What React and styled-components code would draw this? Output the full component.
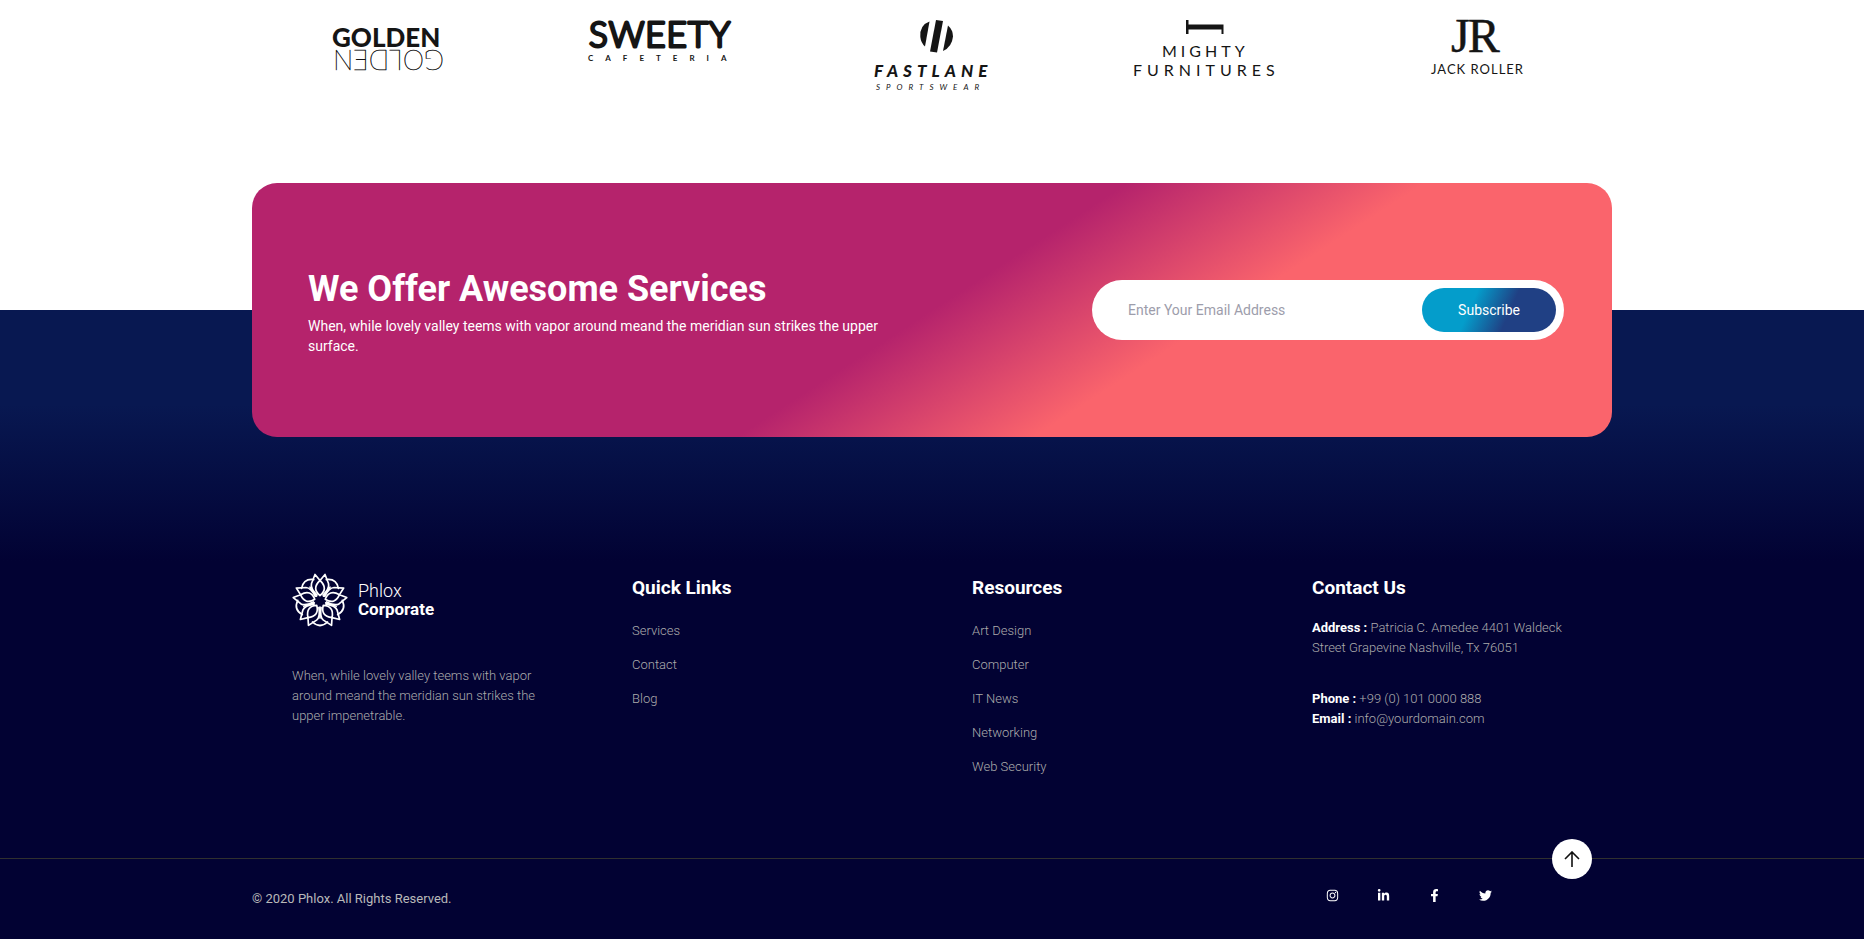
import React from "react";
import styled, { createGlobalStyle } from "styled-components";
import { FaInstagram, FaLinkedinIn, FaFacebookF, FaTwitter } from "react-icons/fa";

const GlobalStyle = createGlobalStyle`
  *, *::before, *::after { box-sizing: border-box; }
  body {
    margin: 0;
    background: #ffffff;
    font-family: Roboto, "Liberation Sans", sans-serif;
  }
  h2, h3, p, ul { margin: 0; padding: 0; }
  ul { list-style: none; }
`;

const Container = styled.div`
  position: relative;
  width: 100%;
  max-width: 1360px;
  margin: 0 auto;
`;

const ClientsSection = styled.section`
  padding: 20px 0 91px;
`;

const ClientRow = styled.ul`
  display: grid;
  grid-template-columns: repeat(5, 1fr);
  justify-items: center;
`;

const ClientLogo = styled.svg`
  display: block;
  width: 160px;
  height: 72px;
  overflow: visible;
  fill: #151515;
`;

const LogoText = styled.text`
  font-family: ${(p) => p.$family || "Lato"}, "Liberation Sans", sans-serif;
  font-size: ${(p) => p.$size}px;
  font-weight: ${(p) => p.$weight || 400};
  font-style: ${(p) => (p.$italic ? "italic" : "normal")};
  letter-spacing: ${(p) => p.$tracking || 0}px;
  stroke: #151515;
  stroke-width: ${(p) => p.$stroke || 0}px;
  stroke-linejoin: round;
`;

const OfferCard = styled.section`
  position: relative;
  z-index: 1;
  display: flex;
  align-items: center;
  justify-content: space-between;
  gap: 40px;
  padding: 81px 48px 81px 56px;
  border-radius: 25px;
  background: linear-gradient(147deg, #b5236c 50%, #fa646c 67%);
  color: #ffffff;
`;

const OfferText = styled.div`
  flex: 0 1 600px;
`;

const OfferTitle = styled.h2`
  margin-bottom: 2px;
  font-size: 36px;
  font-weight: 700;
  line-height: 50px;
`;

const OfferCopy = styled.p`
  font-size: 14px;
  font-weight: 400;
  line-height: 20px;
`;

const SubscribeForm = styled.form`
  display: flex;
  flex: 0 1 472px;
  min-width: 0;
  padding: 8px;
  border-radius: 30px;
  background: #ffffff;
`;

const EmailInput = styled.input`
  flex: 1;
  min-width: 0;
  height: 44px;
  padding: 0 28px;
  border: 0;
  outline: 0;
  background: transparent;
  font: 400 14px/20px Roboto, "Liberation Sans", sans-serif;
  color: #333344;
  &::placeholder { color: #9d9dab; opacity: 1; }
`;

const SubscribeButton = styled.button`
  height: 44px;
  padding: 0 36px;
  border: 0;
  border-radius: 22px;
  background: linear-gradient(114deg, #049dcb 37%, #204084 64%);
  font: 400 14px/20px Roboto, "Liberation Sans", sans-serif;
  color: #ffffff;
  cursor: pointer;
`;

const Footer = styled.footer`
  margin-top: -127px;
  background: linear-gradient(180deg, #081851 15%, #020233 40%);
`;

const FooterColumns = styled.div`
  display: grid;
  grid-template-columns: repeat(4, 1fr);
  padding: 264px 0 81px;
`;

const Column = styled.div`
  padding: 0 48px 0 40px;
`;

const ContactColumn = styled(Column)`
  padding-right: 40px;
`;

const ColumnTitle = styled.h3`
  font-size: 19px;
  font-weight: 700;
  line-height: 28px;
  color: #ffffff;
`;

const Brand = styled.a`
  display: flex;
  align-items: center;
  gap: 10px;
  margin-bottom: 40px;
  color: #ffffff;
  text-decoration: none;
`;

const BrandMark = styled.svg`
  width: 56px;
  height: 52px;
  overflow: visible;
  fill: none;
  stroke: #ffffff;
  stroke-width: 1.7;
  stroke-linejoin: round;
  stroke-linecap: round;
`;

const BrandName = styled.span`
  display: flex;
  flex-direction: column;
  font-size: 17px;
  line-height: 19px;
  font-weight: 700;
`;

const BrandFirst = styled.span`
  font-size: 18px;
  font-weight: 300;
`;

const Copy = styled.p`
  font-size: 13px;
  font-weight: 300;
  line-height: 20px;
  color: #acacac;
`;

const ContactBlock = styled(Copy)`
  margin-top: ${(p) => p.$gap}px;
  strong { font-weight: 700; color: #ffffff; }
`;

const LinkList = styled.ul`
  display: flex;
  flex-direction: column;
  gap: 14px;
  margin-top: 19px;
`;

const FooterLink = styled.a`
  display: block;
  font-size: 13px;
  font-weight: 300;
  line-height: 20px;
  color: #acacac;
  text-decoration: none;
`;

const BottomBar = styled.div`
  border-top: 1px solid #30302f;
`;

const BottomRow = styled.div`
  display: flex;
  align-items: center;
  justify-content: space-between;
  height: 80px;
`;

const Copyright = styled.p`
  font-size: 13px;
  line-height: 20px;
  color: #b9b9b9;
`;

const Social = styled.nav`
  display: flex;
  align-items: center;
  gap: 38px;
  margin: 0 120px 8px 0;
`;

const SocialLink = styled.a`
  display: flex;
  color: #ffffff;
  svg { display: block; width: auto; height: 13px; }
`;

const BackToTop = styled.button`
  position: absolute;
  top: -20px;
  right: 20px;
  display: flex;
  align-items: center;
  justify-content: center;
  width: 40px;
  height: 40px;
  padding: 0;
  border: 0;
  border-radius: 50%;
  background: #ffffff;
  cursor: pointer;
  svg { width: 16px; height: 16px; fill: none; stroke: #111111; stroke-width: 1.6; }
`;

function GoldenLogo() {
  return (
    <ClientLogo viewBox="0 0 160 72" role="img" aria-label="Golden">
      <LogoText x="24" y="27" $size={26} $weight={900}>GOLDEN</LogoText>
      <LogoText x="-136" y="-30" transform="rotate(180)" $size={27} $weight={100} $stroke={0.5}>GOLDEN</LogoText>
    </ClientLogo>
  );
}

function SweetyLogo() {
  return (
    <ClientLogo viewBox="0 0 160 72" role="img" aria-label="Sweety Cafeteria">
      <LogoText x="80" y="27" textAnchor="middle" $size={35} $weight={300} $stroke={3} $tracking={1}>SWEETY</LogoText>
      <LogoText x="8" y="41" $size={8} $weight={700} $tracking={12}>CAFETERIA</LogoText>
    </ClientLogo>
  );
}

function FastlaneLogo() {
  return (
    <ClientLogo viewBox="0 0 160 72" role="img" aria-label="Fastlane Sportswear">
      <path d="M77.5 1.5 Q67.5 5 68.3 17 Q69 23 73 26.5 Z" />
      <path d="M84 0 L91 1 L85 32.5 L78 31.5 Z" />
      <path d="M96 5.5 Q101 10 101 16.5 Q100 27 91 31 Z" />
      <LogoText x="22" y="57" $size={17} $weight={900} $italic $tracking={5}>FASTLANE</LogoText>
      <LogoText x="24" y="70" $size={8} $italic $tracking={6}>SPORTSWEAR</LogoText>
    </ClientLogo>
  );
}

function MightyLogo() {
  return (
    <ClientLogo viewBox="0 0 160 72" role="img" aria-label="Mighty Furnitures">
      <path d="M62 0 H64.5 V4.5 H99.5 V14 H97.5 V9.5 H64.5 V14 H62 Z" />
      <LogoText x="38" y="37" $size={16} $tracking={4}>MIGHTY</LogoText>
      <LogoText x="9" y="56" $size={16} $tracking={5}>FURNITURES</LogoText>
    </ClientLogo>
  );
}

function JackLogo() {
  return (
    <ClientLogo viewBox="0 0 160 72" role="img" aria-label="Jack Roller">
      <LogoText x="55" y="32" $family="Liberation Serif" $size={48} $tracking={-2} $stroke={0.5}>JR</LogoText>
      <LogoText x="35" y="54" $size={13} $tracking={1}>JACK ROLLER</LogoText>
    </ClientLogo>
  );
}

const PETAL_ANGLES = [0, 72, 144, 216, 288];

function FlowerMark() {
  return (
    <BrandMark viewBox="-28 -27 56 52" aria-hidden="true">
      {PETAL_ANGLES.map((angle) => (
        <g key={angle} transform={`rotate(${angle})`}>
          <path d="M0 -20.5 C6 -15 5.5 -10 0 -5.5 C-5.5 -10 -6 -15 0 -20.5 Z" />
          <path d="M-3 -6 C-7 -10 -9.5 -14 -8.5 -17.5 L-5 -26.5 L0 -20.5 L5 -26.5 L8.5 -17.5 C9.5 -14 7 -10 3 -6" />
        </g>
      ))}
      {PETAL_ANGLES.map((angle) => (
        <g key={angle} transform={`rotate(${angle + 36})`}>
          <path d="M0 -6 V-17 M-7.5 -21 Q0 -28 7.5 -21" />
        </g>
      ))}
    </BrandMark>
  );
}

const clients = [GoldenLogo, SweetyLogo, FastlaneLogo, MightyLogo, JackLogo];

const linkGroups = [
  { title: "Quick Links", links: ["Services", "Contact", "Blog"] },
  { title: "Resources", links: ["Art Design", "Computer", "IT News", "Networking", "Web Security"] },
];

const socials = [
  { label: "Instagram", Icon: FaInstagram },
  { label: "LinkedIn", Icon: FaLinkedinIn },
  { label: "Facebook", Icon: FaFacebookF },
  { label: "Twitter", Icon: FaTwitter },
];

export default function App() {
  return (
    <>
      <GlobalStyle />
      <ClientsSection>
        <Container>
          <ClientRow>
            {clients.map((Logo, i) => (
              <li key={i}><Logo /></li>
            ))}
          </ClientRow>
        </Container>
      </ClientsSection>

      <Container>
        <OfferCard>
          <OfferText>
            <OfferTitle>We Offer Awesome Services</OfferTitle>
            <OfferCopy>
              When, while lovely valley teems with vapor around meand the meridian sun strikes the upper surface.
            </OfferCopy>
          </OfferText>
          <SubscribeForm onSubmit={(e) => e.preventDefault()}>
            <EmailInput type="email" aria-label="Email address" placeholder="Enter Your Email Address" />
            <SubscribeButton type="submit">Subscribe</SubscribeButton>
          </SubscribeForm>
        </OfferCard>
      </Container>

      <Footer>
        <Container>
          <FooterColumns>
            <Column>
              <Brand href="#">
                <FlowerMark />
                <BrandName>
                  <BrandFirst>Phlox</BrandFirst>
                  <span>Corporate</span>
                </BrandName>
              </Brand>
              <Copy>
                When, while lovely valley teems with vapor around meand the meridian sun strikes the upper impenetrable.
              </Copy>
            </Column>
            {linkGroups.map((group) => (
              <Column key={group.title}>
                <ColumnTitle>{group.title}</ColumnTitle>
                <LinkList>
                  {group.links.map((link) => (
                    <li key={link}><FooterLink href="#">{link}</FooterLink></li>
                  ))}
                </LinkList>
              </Column>
            ))}
            <ContactColumn>
              <ColumnTitle>Contact Us</ColumnTitle>
              <ContactBlock $gap={16}>
                <strong>Address :</strong> Patricia C. Amedee 4401 Waldeck Street Grapevine Nashville, Tx 76051
              </ContactBlock>
              <ContactBlock $gap={31}>
                <strong>Phone :</strong> +99 (0) 101 0000 888
                <br />
                <strong>Email :</strong> info@yourdomain.com
              </ContactBlock>
            </ContactColumn>
          </FooterColumns>
        </Container>
        <BottomBar>
          <Container>
            <BottomRow>
              <Copyright>© 2020 Phlox. All Rights Reserved.</Copyright>
              <Social aria-label="Social media">
                {socials.map(({ label, Icon }) => (
                  <SocialLink key={label} href="#" aria-label={label}><Icon /></SocialLink>
                ))}
              </Social>
            </BottomRow>
            <BackToTop type="button" aria-label="Back to top">
              <svg viewBox="0 0 16 16"><path d="M8 16 V1 M1 8 L8 1 L15 8" /></svg>
            </BackToTop>
          </Container>
        </BottomBar>
      </Footer>
    </>
  );
}
